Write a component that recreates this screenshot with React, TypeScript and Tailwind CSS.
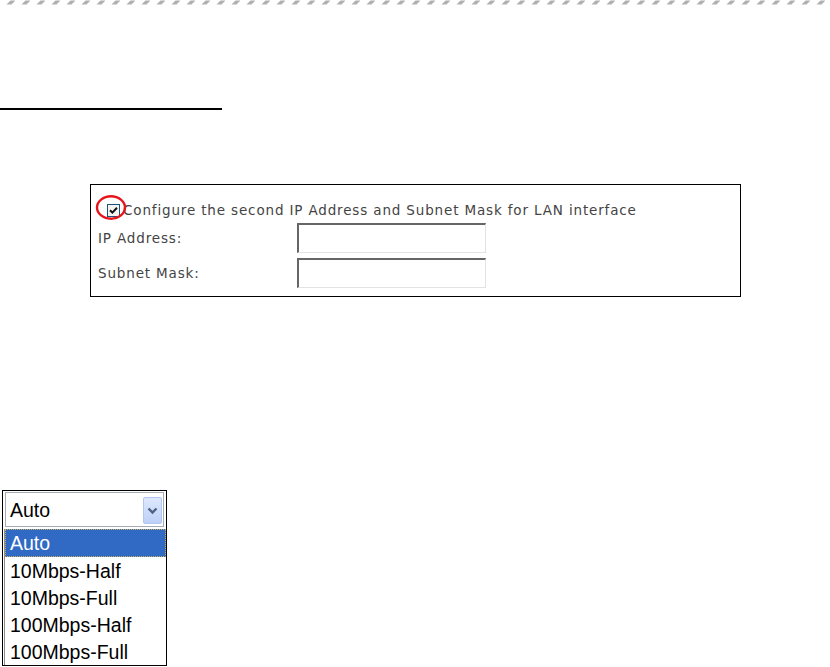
const options = ["10Mbps-Half", "10Mbps-Full", "100Mbps-Half", "100Mbps-Full"];

function HatchStrip() {
  return (
    <svg width="830" height="5" className="block">
      <defs>
        <pattern id="hatch" patternUnits="userSpaceOnUse" width="15" height="5" x="0">
          <polygon points="6.5,4.5 11.5,4.5 15.5,0.5 10.5,0.5" fill="#b0b0b0" />
        </pattern>
      </defs>
      <rect x="0" y="0" width="830" height="5" fill="url(#hatch)" />
    </svg>
  );
}

function TextInput() {
  return (
    <div className="h-[30px] w-[189px] border-t-2 border-l-2 border-b border-r border-t-[#666] border-l-[#666] border-b-[#e4e3df] border-r-[#e4e3df] bg-white" />
  );
}

function LanBox() {
  return (
    <div className="ml-[90px] mt-[74px] h-[113px] w-[651px] border border-black pl-[7px] pt-[16px] font-['DejaVu_Sans',sans-serif] text-[13.5px] tracking-[0.85px] text-[#444]">
      <div className="relative flex h-[18px] items-center">
        <div className="ml-[9px] flex h-[13px] w-[13px] items-center justify-center border border-[#1c5180] bg-[#f4f4f0]">
          <svg width="9" height="9" viewBox="0 0 9 9">
            <path d="M1 4.2 L3.4 6.6 L8 1.8" fill="none" stroke="#111" strokeWidth="2" />
          </svg>
        </div>
        <span className="ml-[3px]">Configure the second IP Address and Subnet Mask for LAN interface</span>
        <svg className="absolute left-[-3px] top-[-7px]" width="32" height="28" viewBox="0 0 32 28">
          <ellipse cx="16" cy="13.5" rx="14" ry="11.2" fill="none" stroke="#e8141b" strokeWidth="2.4" />
        </svg>
      </div>
      <div className="mt-[4px] flex items-center">
        <span className="w-[199px]">IP Address:</span>
        <TextInput />
      </div>
      <div className="mt-[5px] flex items-center">
        <span className="w-[199px]">Subnet Mask:</span>
        <TextInput />
      </div>
    </div>
  );
}

function SpeedDropdown() {
  return (
    <div className="ml-[2px] mt-[193px] h-[176px] w-[165px] border border-black font-['Liberation_Sans',Arial,sans-serif] text-[19.5px] leading-none text-black">
      <div className="mx-[2px] mt-[1px] flex h-[35px] items-center border border-[#a5acb5] bg-white pl-[4px] pr-[1px] pt-[2px]">
        <span className="flex-1">Auto</span>
        <div className="flex h-[27px] w-[19px] items-center justify-center rounded-[2px] border border-[#b2c6f2] bg-gradient-to-b from-[#dfe9fd] to-[#bcd0f8]">
          <svg width="11" height="8" viewBox="0 0 11 8">
            <path d="M1.5 1.5 L5.5 5.5 L9.5 1.5" fill="none" stroke="#4d6185" strokeWidth="2.4" />
          </svg>
        </div>
      </div>
      <div className="ml-[1px] mt-[2px] border-l border-[#8c8c8c]">
        <div className="flex h-[28px] items-center border border-dotted border-[#c8b060] bg-[#316ac5] pl-[4px] pt-[2px] text-white">
          Auto
        </div>
        {options.map((o) => (
          <div key={o} className="flex h-[27px] items-center pl-[5px] pt-[2px]">
            {o}
          </div>
        ))}
      </div>
    </div>
  );
}

export default function App() {
  return (
    <div className="h-[667px] w-[830px] overflow-hidden bg-white">
      <HatchStrip />
      <div className="mt-[103px] h-[2px] w-[222px] bg-black" />
      <LanBox />
      <SpeedDropdown />
    </div>
  );
}
